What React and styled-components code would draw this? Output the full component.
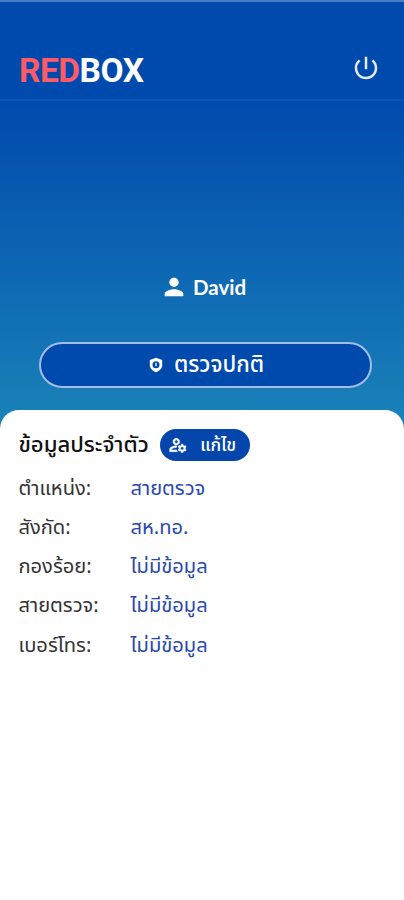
import styled, { createGlobalStyle } from 'styled-components'
import {
  MdOutlineManageAccounts,
  MdPerson,
  MdPowerSettingsNew,
} from 'react-icons/md'

const GlobalStyle = createGlobalStyle`
  * {
    box-sizing: border-box;
  }

  body {
    margin: 0;
    background-color: #fefefe;
    font-family: 'Noto Sans', 'Noto Sans Thai', 'Open Sans', sans-serif;
  }
`

const Screen = styled.main`
  display: flex;
  flex-direction: column;
  height: 900px;
  overflow: hidden;
  background: linear-gradient(#004aad 100px, #1a82b9 425px);
`

const TopBar = styled.header`
  display: flex;
  justify-content: space-between;
  align-items: center;
  height: 101px;
  padding: 35px 23px 0 19px;
  border-top: 2px solid #4b7dc5;
  border-bottom: 2px solid #0c52b2;
  background-color: #004aad;
`

const Brand = styled.h1`
  margin: 6px 0 0;
  color: #fff;
  font-size: 33.5px;
  font-weight: 700;
  font-family: Roboto, sans-serif;
  line-height: 36px;
  letter-spacing: -0.5px;

  span {
    color: #ff5a68;
  }
`

const IconButton = styled.button`
  display: flex;
  padding: 0;
  border: 0;
  background: none;
  color: #e4ebf7;
`

const Profile = styled.section`
  display: flex;
  flex-direction: column;
  align-items: center;
  height: 309px;
  padding: 172px 32px 0 39px;
  color: #fff;
`

const UserName = styled.div`
  display: flex;
  align-items: center;
  gap: 5px;
  height: 28px;
  margin-right: 5px;
  font-family: Lato, sans-serif;
  font-size: 20.5px;
  font-weight: 700;
`

const StatusButton = styled.button`
  display: flex;
  justify-content: center;
  align-items: center;
  gap: 11px;
  width: 100%;
  height: 46px;
  margin-top: 41px;
  padding-left: 8px;
  border: 2px solid #a4bde4;
  border-radius: 23px;
  background-color: #004aad;
  color: #fff;
  font-family: inherit;
  font-size: 22.3px;
  font-weight: 500;
`

const Panel = styled.section`
  flex: 1;
  padding: 19px 18.5px 0;
  border-radius: 19px 19px 0 0;
  background-color: #fefefe;
`

const PanelHeader = styled.div`
  display: flex;
  align-items: center;
  gap: 11.5px;
  height: 32px;
`

const PanelTitle = styled.h2`
  margin: -4px 0 0;
  color: #111;
  font-size: 22.1px;
  font-weight: 500;
  line-height: 32px;
  white-space: nowrap;
`

const EditButton = styled.button`
  display: flex;
  align-items: center;
  gap: 12px;
  width: 90px;
  height: 32px;
  padding: 0 8px;
  border: 0;
  border-radius: 16px;
  background-color: #0546ad;
  color: #fff;
  font-family: inherit;
  font-size: 17.5px;
  font-weight: 500;
  white-space: nowrap;

  svg {
    flex-shrink: 0;
  }

  path:not([fill='none']) {
    stroke: currentColor;
    stroke-width: 0.6px;
  }
`

const InfoList = styled.dl`
  display: grid;
  grid-template-columns: 112px 1fr;
  grid-auto-rows: 39.25px;
  align-items: center;
  margin: 6.5px 0 0;
  font-size: 20.1px;
  font-weight: 400;
  line-height: 39px;
  white-space: nowrap;

  dt {
    color: #333;
  }

  dd {
    margin: 0;
    color: #2948ac;
  }
`

const InfoItem = styled.div`
  display: contents;
`

const info = [
  { label: 'ตำแหน่ง:', value: 'สายตรวจ' },
  { label: 'สังกัด:', value: 'สห.ทอ.' },
  { label: 'กองร้อย:', value: 'ไม่มีข้อมูล' },
  { label: 'สายตรวจ:', value: 'ไม่มีข้อมูล' },
  { label: 'เบอร์โทร:', value: 'ไม่มีข้อมูล' },
]

const ShieldIcon = () => (
  <svg width='14' height='16' viewBox='0 0 14 16'>
    <path
      fill='#fff'
      d='M7 .7 13.2 3v5.1c0 3.3-2.5 5.9-6.2 7.2C3.3 14 .8 11.4 .8 8.1V3z'
    />
    <circle cx='7' cy='7.7' r='3.5' fill='#004aad' />
    <path stroke='#fff' strokeWidth='1.3' d='M7 5.8v3.4' />
  </svg>
)

const App = () => {
  return (
    <>
      <GlobalStyle />
      <Screen>
        <TopBar>
          <Brand>
            <span>RED</span>BOX
          </Brand>
          <IconButton aria-label='Logout'>
            <MdPowerSettingsNew size={30} />
          </IconButton>
        </TopBar>
        <Profile>
          <UserName>
            <MdPerson size={28} />
            David
          </UserName>
          <StatusButton>
            <ShieldIcon />
            ตรวจปกติ
          </StatusButton>
        </Profile>
        <Panel>
          <PanelHeader>
            <PanelTitle>ข้อมูลประจำตัว</PanelTitle>
            <EditButton>
              <MdOutlineManageAccounts size={20} />
              แก้ไข
            </EditButton>
          </PanelHeader>
          <InfoList>
            {info.map(({ label, value }) => (
              <InfoItem key={label}>
                <dt>{label}</dt>
                <dd>{value}</dd>
              </InfoItem>
            ))}
          </InfoList>
        </Panel>
      </Screen>
    </>
  )
}

export default App
